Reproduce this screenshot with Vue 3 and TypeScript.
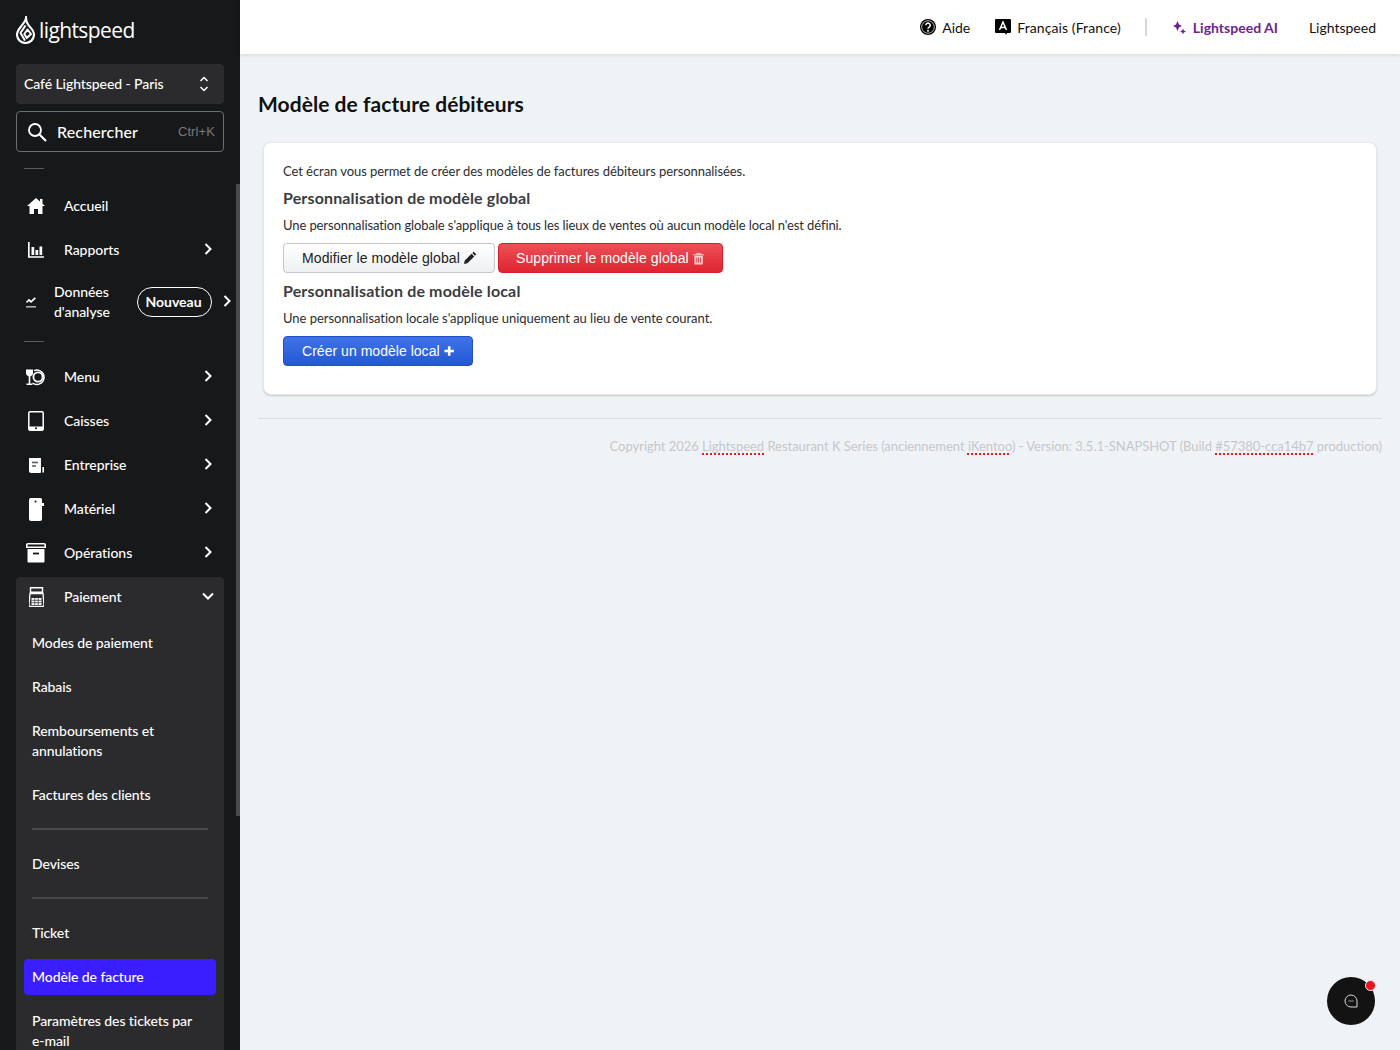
<script setup lang="ts">
interface NavItem { label: string; icon: string }
const topItems: NavItem[] = [
  { label: 'Menu', icon: 'menu' },
  { label: 'Caisses', icon: 'tablet' },
  { label: 'Entreprise', icon: 'biz' },
  { label: 'Matériel', icon: 'hw' },
  { label: 'Opérations', icon: 'ops' },
]
</script>

<template>
  <div class="page">
    <aside class="side">
      <div class="logo">
        <svg class="flame" width="19" height="28" viewBox="0 0 19 28">
          <path d="M10 1 C10.500 4 8 6.500 5 10.500 C2.200 14 1 16 1 18.500 C1 23.500 5 27 9.500 27 C14 27 18 23.500 18 18.500 C18 15.500 16.500 13.500 14 11 C11.500 8.500 10 5 10 1 Z" fill="none" stroke="#fff" stroke-width="2.100" stroke-linejoin="round"/>
          <path d="M9.500 9.500 4.500 17 9 24.500M11.500 13.500 8.300 18 10.800 22 15 18 Z" fill="none" stroke="#fff" stroke-width="2" stroke-linejoin="round"/>
        </svg>
        <span class="word">lightspeed</span>
      </div>

      <div class="store">
        <span>Café Lightspeed - Paris</span>
        <svg width="10" height="16" viewBox="0 0 10 16"><path d="M1.500 5 5 1.500 8.500 5M1.500 11 5 14.500 8.500 11" fill="none" stroke="#fff" stroke-width="1.500"/></svg>
      </div>

      <div class="search">
        <svg width="20" height="20" viewBox="0 0 20 20"><circle cx="8" cy="8" r="6" fill="none" stroke="#fff" stroke-width="1.800"/><path d="M12.500 12.500 19 19" stroke="#fff" stroke-width="2.200"/></svg>
        <span class="search-label">Rechercher</span>
        <span class="kbd">Ctrl+K</span>
      </div>

      <div class="rule first"></div>

      <nav class="nav">
        <div class="item">
          <span class="ico"><svg width="18" height="16" viewBox="0 0 18 16"><path d="M9 0 0 8h2.500v8h4.500v-5h4v5h4.500V8H18L15.500 5.700V1h-2.500v2.500Z" fill="#fff"/></svg></span>
          <span class="lbl">Accueil</span>
        </div>
        <div class="item">
          <span class="ico"><svg width="16" height="16" viewBox="0 0 16 16"><path d="M.8 0v15H16" fill="none" stroke="#fff" stroke-width="1.700"/><path d="M3.500 5h2.700v8H3.500ZM7.500 8h2.700v5H7.500ZM11.500 4.500h2.700V13h-2.700Z" fill="#fff"/></svg></span>
          <span class="lbl">Rapports</span>
          <svg class="chev" width="8" height="12" viewBox="0 0 8 12"><path d="M1.500 1 6.500 6l-5 5" fill="none" stroke="#fff" stroke-width="2"/></svg>
        </div>
        <div class="item data">
          <span class="ico small"><svg width="10" height="11" viewBox="0 0 10 11"><path d="M.5 5.500 3 3l2 1.800L9.300 .8" fill="none" stroke="#fff" stroke-width="1.700"/><path d="M0 9.800h10" stroke="#b9b9ba" stroke-width="1.500"/></svg></span>
          <span class="data-lbl">Données d'analyse</span>
          <span class="badge">Nouveau</span>
          <svg class="chev-data" width="8" height="12" viewBox="0 0 8 12"><path d="M1.500 1 6.500 6l-5 5" fill="none" stroke="#fff" stroke-width="2"/></svg>
        </div>
      </nav>

      <div class="rule second"></div>

      <nav class="nav">
        <div v-for="it in topItems" :key="it.label" class="item">
          <span class="ico">
            <svg v-if="it.icon === 'menu'" width="20" height="17" viewBox="0 0 20 17"><path d="M0 .5h7v3.500A3.400 3.400 0 0 1 4.300 7.400V14.500h2.200V16H.5v-1.500h2.200V7.400A3.400 3.400 0 0 1 0 4Z" fill="#fff"/><path d="M8 1.600A7.200 7.200 0 1 1 6.500 14" fill="none" stroke="#fff" stroke-width="1.500"/><circle cx="12" cy="8" r="4.600" fill="none" stroke="#fff" stroke-width="1.800"/></svg>
            <svg v-else-if="it.icon === 'tablet'" width="16" height="20" viewBox="0 0 16 20"><path d="M2 .8h12a1.200 1.200 0 0 1 1.200 1.200v16a1.200 1.200 0 0 1-1.200 1.200H2A1.200 1.200 0 0 1 .8 18V2A1.200 1.200 0 0 1 2 .8Z" fill="none" stroke="#fff" stroke-width="1.500"/><path d="M1 15.500h14V19H1Z" fill="#fff"/><circle cx="8" cy="17.300" r="1" fill="#17181a"/></svg>
            <svg v-else-if="it.icon === 'biz'" width="16" height="15" viewBox="0 0 16 15"><path d="M1 0h12v14a1 1 0 0 1-1 1H3a2 2 0 0 1-2-2Z" fill="#fff"/><path d="M4 4.500h6M4 8h4" stroke="#55565a" stroke-width="1.500"/><path d="M14.400 9H16v5.500h-1.600Z" fill="#fff"/></svg>
            <svg v-else-if="it.icon === 'hw'" width="15" height="23" viewBox="0 0 15 23"><path d="M2 0h9.500a1.500 1.500 0 0 1 1.500 1.500V5h2v3h-2v13a2 2 0 0 1-2 2H2a2 2 0 0 1-2-2V2a2 2 0 0 1 2-2Z" fill="#fff"/><circle cx="6.500" cy="3.500" r="1" fill="#17181a"/></svg>
            <svg v-else width="20" height="20" viewBox="0 0 20 20"><path d="M1.800.8h16.400a1 1 0 0 1 1 1v2.500H.8V1.800a1 1 0 0 1 1-1Z" fill="none" stroke="#fff" stroke-width="1.600"/><path d="M1.500 6h17v12.500a1 1 0 0 1-1 1h-15a1 1 0 0 1-1-1Z" fill="#fff"/><path d="M7 10.500h6" stroke="#17181a" stroke-width="1.800"/></svg>
          </span>
          <span class="lbl">{{ it.label }}</span>
          <svg class="chev" width="8" height="12" viewBox="0 0 8 12"><path d="M1.500 1 6.500 6l-5 5" fill="none" stroke="#fff" stroke-width="2"/></svg>
        </div>
      </nav>

      <div class="group">
        <div class="item head">
          <span class="ico"><svg width="15" height="20" viewBox="0 0 15 20"><path d="M1.500.8h12v4.500h-12Z" fill="none" stroke="#fff" stroke-width="1.400"/><path d="M1 6.500h13l1 11.500a1.500 1.500 0 0 1-1.500 1.500h-12A1.500 1.500 0 0 1 0 18Z" fill="none" stroke="#fff" stroke-width="1.300"/><path d="M2.500 11h10v7h-10Z" fill="#fff"/><path d="M2.500 13.300h10M2.500 15.700h10M5.800 11v7M9.200 11v7" stroke="#2b2b2e" stroke-width=".7"/></svg></span>
          <span class="lbl">Paiement</span>
          <svg class="chev-down" width="12" height="8" viewBox="0 0 12 8"><path d="M1 1.500 6 6.500l5-5" fill="none" stroke="#fff" stroke-width="2"/></svg>
        </div>
        <a class="sub">Modes de paiement</a>
        <a class="sub">Rabais</a>
        <a class="sub">Remboursements et annulations</a>
        <a class="sub">Factures des clients</a>
        <div class="sub-rule"></div>
        <a class="sub">Devises</a>
        <div class="sub-rule"></div>
        <a class="sub">Ticket</a>
        <a class="sub active">Modèle de facture</a>
        <a class="sub">Paramètres des tickets par <span class="nowrap">e-mail</span></a>
      </div>

      <div class="thumb"></div>
    </aside>

    <main class="main">
      <header class="top">
        <span class="top-link">
          <svg width="16" height="16" viewBox="0 0 16 16"><circle cx="8" cy="8" r="8" fill="#000"/><circle cx="8" cy="8" r="6.300" fill="none" stroke="#fff" stroke-width=".7"/><path d="M5.800 6.200a2.200 2.200 0 1 1 3.400 1.900c-.8.500-1.200.9-1.200 1.700" fill="none" stroke="#fff" stroke-width="1.500"/><circle cx="8" cy="11.800" r="1" fill="#fff"/></svg>
          Aide
        </span>
        <span class="top-link lang">
          <svg width="16" height="16" viewBox="0 0 16 16"><path d="M1 0h14a1 1 0 0 1 1 1v12a1 1 0 0 1-1 1h-3l-1 2-1-2H1a1 1 0 0 1-1-1V1a1 1 0 0 1 1-1Z" fill="#000"/><path d="M4.500 11 8 3l3.500 8M5.800 8.500h4.400" fill="none" stroke="#fff" stroke-width="1.500"/></svg>
          Français (France)
        </span>
        <span class="sep"></span>
        <span class="ai">
          <svg width="13" height="13" viewBox="0 0 13 13"><path d="M4.500 0 6 3.500 9 5 6 6.500 4.500 10 3 6.500 0 5 3 3.500ZM10 7.500l.9 2 2.100.9-2.100 1-.9 1.600-.9-1.600-2.100-1 2.100-.9Z" fill="#6f2391"/></svg>
          Lightspeed AI
        </span>
        <span class="top-link acct">Lightspeed</span>
      </header>

      <div class="content">
        <h1>Modèle de facture débiteurs</h1>
        <section class="card">
          <p class="line">Cet écran vous permet de créer des modèles de factures débiteurs personnalisées.</p>
          <h2>Personnalisation de modèle global</h2>
          <p class="line l2">Une personnalisation globale s'applique à tous les lieux de ventes où aucun modèle local n'est défini.</p>
          <div class="btns">
            <button class="btn plain">Modifier le modèle global
              <svg width="12" height="12" viewBox="0 0 13 13"><path d="M0 13 .8 9.300 8.200 1.900l2.900 2.900-7.400 7.400ZM9 1.100 9.900.2a.8.8 0 0 1 1.100 0l1.800 1.800a.8.800 0 0 1 0 1.100l-.9.900Z" fill="#222"/></svg>
            </button>
            <button class="btn danger">Supprimer le modèle global
              <svg width="12" height="13" viewBox="0 0 12 13"><path d="M.5 2.500h11" stroke="#f8cfd1" stroke-width="1.200"/><path d="M4 2.500V1h4v1.500" fill="none" stroke="#f8cfd1"/><path d="M1.500 3.500h9V12a1 1 0 0 1-1 1h-7a1 1 0 0 1-1-1Z" fill="#f8cfd1"/><path d="M4 5.500v5.500M6 5.500v5.500M8 5.500v5.500" stroke="#e3424a"/></svg>
            </button>
          </div>
          <h2>Personnalisation de modèle local</h2>
          <p class="line l3">Une personnalisation locale s'applique uniquement au lieu de vente courant.</p>
          <div class="btns">
            <button class="btn primary">Créer un modèle local
              <svg width="12" height="12" viewBox="0 0 12 12"><path d="M6 .5v11M.5 6h11" stroke="#fff" stroke-width="3"/></svg>
            </button>
          </div>
        </section>
        <footer class="foot">
          Copyright 2026 <span class="spell">Lightspeed</span> Restaurant K Series (anciennement <span class="spell">iKentoo</span>) - Version: 3.5.1-SNAPSHOT (Build <span class="spell">#57380-cca14b7</span> production)
        </footer>
      </div>
    </main>

    <div class="chat">
      <svg width="14" height="14" viewBox="0 0 14 14"><path d="M7 1a6 6 0 1 0 0 12h6V7a6 6 0 0 0-6-6Z" fill="none" stroke="#d8d8d8" stroke-width="1"/><path d="M4.500 7h5" stroke="#d8d8d8" stroke-width="1.200" stroke-dasharray="1.200 .7"/></svg>
      <span class="dot"></span>
    </div>
  </div>
</template>

<style>
html, body { margin: 0; padding: 0; }
</style>

<style scoped>
.page { display: flex; width: 1400px; height: 1050px; overflow: hidden; background: #f0f3f6; font-family: Lato, "Noto Sans", sans-serif; position: relative; }
.side { position: relative; width: 240px; height: 1050px; flex: none; background: #17181a; color: #fff; padding: 0 16px; box-sizing: border-box; overflow: hidden; font-size: 14px; line-height: 20px; letter-spacing: -.05px; }
.logo { height: 64px; display: flex; align-items: center; padding-bottom: 5px; box-sizing: border-box; }
.flame { flex: none; }
.word { font-family: "Open Sans", sans-serif; font-size: 21px; font-weight: 500; letter-spacing: -.6px; margin-left: 4px; line-height: 28px; }
.store { height: 40px; background: #2b2b2e; border-radius: 4px; display: flex; align-items: center; justify-content: space-between; padding: 0 15px 0 8px; font-weight: 500; letter-spacing: -.08px; }
.search { height: 41px; margin-top: 7px; border: 1px solid #6c6d70; border-radius: 4px; box-sizing: border-box; display: flex; align-items: center; padding: 0 8px 0 10px; }
.search-label { font-size: 16px; font-weight: 500; margin-left: 10px; flex: 1; letter-spacing: .15px; }
.kbd { font-family: "Liberation Sans", sans-serif; font-size: 13px; color: #77787b; letter-spacing: .1px; }
.rule { width: 20px; height: 1px; background: #5a5b5e; margin-left: 8px; }
.rule.first { margin-top: 16px; margin-bottom: 15px; }
.rule.second { margin-top: 9px; margin-bottom: 13px; }
.item { height: 44px; display: flex; align-items: center; position: relative; font-weight: 500; }
.ico { width: 40px; flex: none; display: flex; justify-content: center; }
.lbl { margin-left: 8px; flex: 1; }
.chev { margin: 0 12px 2px 0; }
.chev-down { margin: 0 10px 2px 0; }
.data { height: 60px; }
.ico.small { width: 30px; }
.data-lbl { width: 70px; margin-left: 8px; flex: none; }
.badge { flex: none; width: 75px; height: 30px; box-sizing: border-box; border: 1px solid #fff; border-radius: 15px; font-weight: 700; letter-spacing: 0; display: flex; align-items: center; justify-content: center; margin-left: 13px; padding-right: 2px; }
.chev-data { margin: 0 0 2px 11px; flex: none; }
.group { background: #2b2b2e; border-radius: 4px; padding-bottom: 40px; margin-top: 2px; }
.head { height: 40px; }
.sub { display: block; padding: 12px 8px; margin: 0 8px; font-weight: 500; letter-spacing: -.08px; }
.nowrap { white-space: nowrap; }
.head + .sub { margin-top: 4px; }
.sub-rule { height: 2px; background: #48484c; margin: 11px 16px 12px; }
.sub.active { background: #3a1eff; border-radius: 4px; padding: 8px; margin-top: 4px; margin-bottom: 4px; }
.thumb { position: absolute; right: 0; top: 184px; width: 4px; height: 632px; background: #4a4b4e; }
.main { flex: 1; min-width: 0; }
.top { height: 54px; background: #fff; box-shadow: 0 1px 4px rgba(0,0,0,.12); display: flex; align-items: center; justify-content: flex-end; padding-right: 24px; font-size: 14px; color: #111; position: relative; }
.top-link { display: inline-flex; align-items: center; gap: 6px; }
.lang { margin-left: 25px; letter-spacing: .1px; }
.sep { width: 2px; height: 18px; background: #d5d9de; margin: 0 26px 0 24px; }
.ai { display: inline-flex; align-items: center; gap: 7px; color: #6f2391; font-weight: 700; }
.acct { margin-left: 31px; }
.content { padding: 0 18px; }
h1 { margin: 0; padding-top: 35px; height: 53px; font-size: 21px; line-height: 30px; font-weight: 700; color: #111; letter-spacing: .05px; }
.card { margin: 0 5px; height: 253px; box-sizing: border-box; background: #fff; border-radius: 8px; border: 1px solid #e6e9ed; box-shadow: 0 1px 2px rgba(0,0,0,.18); padding: 18px 19px; color: #2c2d30; }
.line { margin: 0; font-size: 13px; line-height: 20px; letter-spacing: -.06px; }
.l2 { letter-spacing: -.1px; }
.l3 { letter-spacing: -.03px; }
h2 { margin: 5px 0 0; font-size: 16px; line-height: 24px; font-weight: 700; color: #3b3c3f; letter-spacing: .15px; }
h2 + .line { margin-top: 5px; }
.btns { display: flex; gap: 3px; margin-top: 8px; margin-bottom: 6px; }
.btn { height: 30px; box-sizing: border-box; border-radius: 4px; font-family: "Liberation Sans", sans-serif; font-size: 14px; letter-spacing: .09px; padding: 0 18px; display: inline-flex; align-items: center; gap: 4px; border: 1px solid; white-space: nowrap; }
.plain { width: 212px; color: #222; background: linear-gradient(#fff, #eef0f2); border-color: #c3c8ce; }
.danger { width: 225px; padding-left: 17px; color: #fff; background: linear-gradient(#ec5058, #df2530); border-color: #d5202b; }
.primary { width: 190px; letter-spacing: .03px; color: #fff; background: linear-gradient(#4073e6, #2358d6); border-color: #1f50c6; }
.foot { margin-top: 23px; border-top: 1px solid #dadee3; padding-top: 17px; text-align: right; font-size: 13px; line-height: 20px; color: #c4c8cd; white-space: nowrap; letter-spacing: -.03px; }
.spell { text-decoration: underline dotted #e02020 1.500px; text-underline-offset: 2px; }
.chat { position: absolute; left: 1327px; top: 977px; width: 48px; height: 48px; border-radius: 50%; background: #131313; display: flex; align-items: center; justify-content: center; }
.dot { position: absolute; right: -1px; top: 3px; width: 9px; height: 9px; background: #e8161c; border-radius: 50%; border: 1px solid #eef1f4; }
</style>
